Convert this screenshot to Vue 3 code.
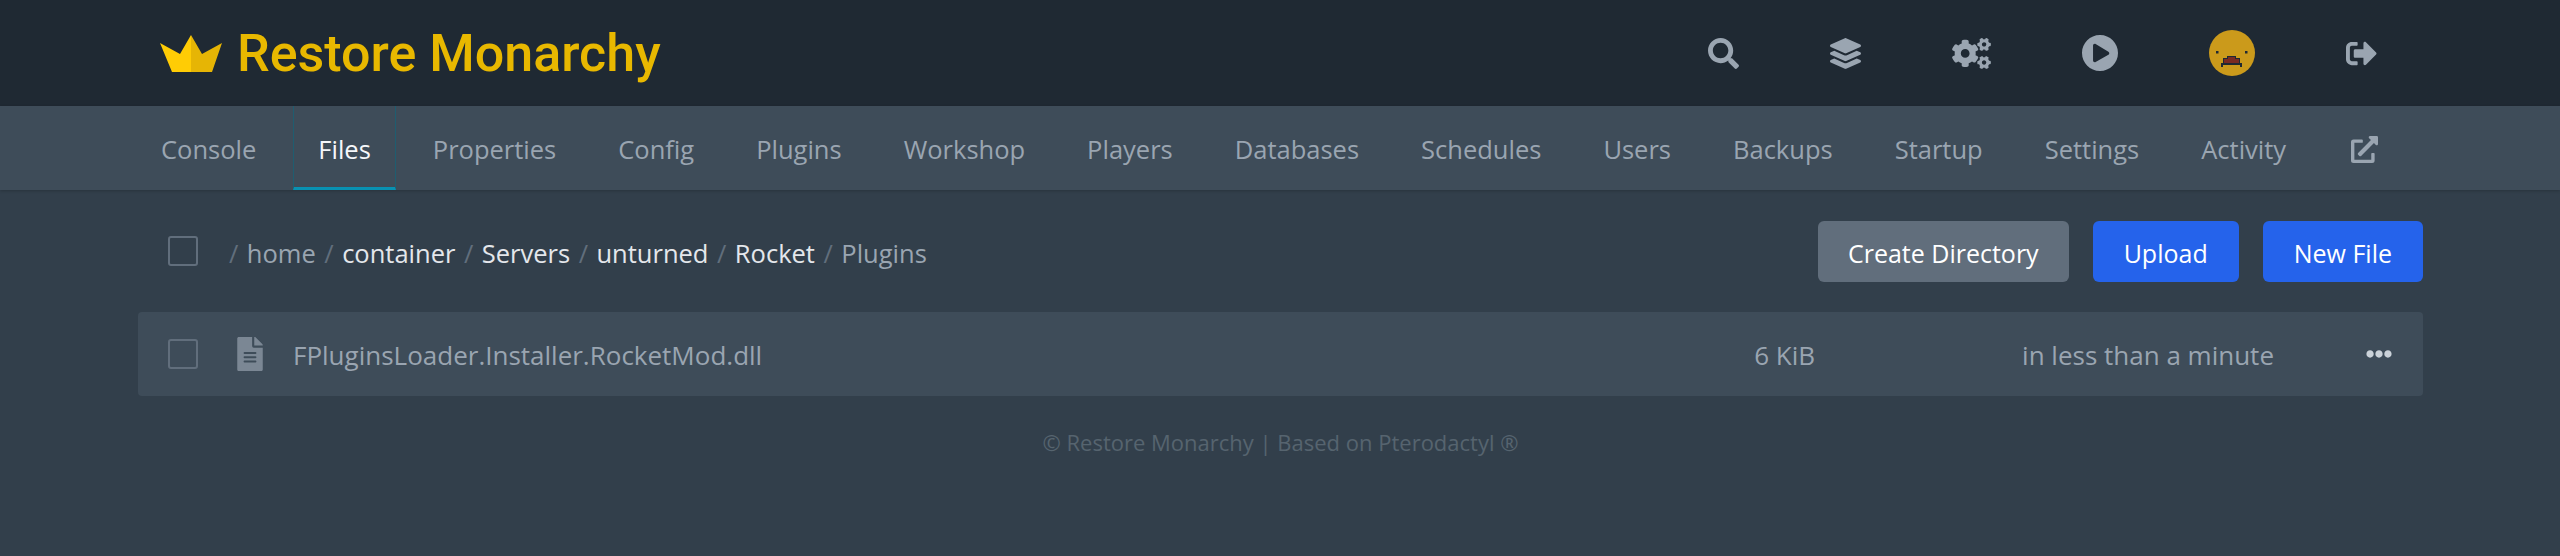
<template>
  <div class="page">
    <header class="topbar">
      <div class="topbar-inner">
        <a class="brand">
          <svg class="crown" viewBox="0 0 62 37">
            <path d="M31 0 L42 19 L62 8 L52 37 L31 37 Z" fill="#e6b505" />
            <path d="M31 0 L20 19 L0 8 L12 37 L31 37 Z" fill="#ffcc05" />
          </svg>
          <span class="brand-name">Restore Monarchy</span>
        </a>
        <div class="top-icons">
          <span v-for="icon in topIcons" :key="icon.name" class="top-icon" :class="icon.name">
            <svg :viewBox="icon.box"><path :d="icon.d" /></svg>
          </span>
          <span class="top-icon avatar-wrap">
            <svg class="avatar" viewBox="0 0 46 46">
              <circle cx="23" cy="23" r="23" fill="#cb9a1b" />
              <rect x="7" y="21" width="2.5" height="2.5" fill="#1f2933" />
              <rect x="36" y="21" width="2.5" height="2.5" fill="#1f2933" />
              <rect x="18" y="26" width="9" height="2" fill="#1f2933" />
              <rect x="14" y="28" width="17" height="6" fill="#1f2933" />
              <rect x="19" y="27" width="7" height="2" fill="#7a2a22" />
              <rect x="15" y="29" width="15" height="4" fill="#7a2a22" />
              <rect x="12" y="33" width="21" height="2" fill="#1f2933" />
              <rect x="12" y="35" width="2" height="2" fill="#1f2933" />
              <rect x="31" y="35" width="2" height="2" fill="#1f2933" />
            </svg>
          </span>
          <span class="top-icon logout">
            <svg viewBox="0 0 512 512"><path :d="icons.logout" /></svg>
          </span>
        </div>
      </div>
    </header>

    <nav class="subnav">
      <div class="subnav-inner">
        <a v-for="tab in tabs" :key="tab" class="tab" :class="{ active: tab === 'Files' }">{{ tab }}</a>
        <a class="tab tab-ext">
          <svg viewBox="0 0 512 512"><path :d="icons.external" /></svg>
        </a>
      </div>
    </nav>

    <main class="content">
      <div class="toolbar">
        <div class="crumbs-wrap">
          <span class="checkbox"></span>
          <div class="crumbs">
            <span class="sep">/</span>
            <span class="crumb muted">home</span>
            <span class="sep">/</span>
            <template v-for="part in path" :key="part">
              <span class="crumb">{{ part }}</span>
              <span class="sep">/</span>
            </template>
            <span class="crumb muted">Plugins</span>
          </div>
        </div>
        <div class="actions">
          <button class="btn btn-grey">Create Directory</button>
          <button class="btn btn-blue">Upload</button>
          <button class="btn btn-blue">New File</button>
        </div>
      </div>

      <div class="file-row">
        <span class="checkbox"></span>
        <svg class="file-icon" viewBox="0 0 384 512"><path :d="icons.file" /></svg>
        <span class="file-name">FPluginsLoader.Installer.RocketMod.dll</span>
        <span class="file-size">6 KiB</span>
        <span class="file-date">in less than a minute</span>
        <svg class="file-menu" viewBox="0 0 512 512"><path :d="icons.dots" /></svg>
      </div>

      <p class="footer">© Restore Monarchy | Based on Pterodactyl ®</p>
    </main>
  </div>
</template>

<script setup>
const icons = {
  external: 'M432,320H400a16,16,0,0,0-16,16V448H64V128H208a16,16,0,0,0,16-16V80a16,16,0,0,0-16-16H48A48,48,0,0,0,0,112V464a48,48,0,0,0,48,48H400a48,48,0,0,0,48-48V336A16,16,0,0,0,432,320ZM488,0h-128c-21.37,0-32.05,25.91-17,41l35.73,35.73L135,320.37a24,24,0,0,0,0,34L157.67,377a24,24,0,0,0,34,0L435.28,133.32,471,169c15,15,41,4.5,41-17V24A24,24,0,0,0,488,0Z',
  file: 'M224 136V0H24C10.7 0 0 10.7 0 24v464c0 13.3 10.7 24 24 24h336c13.3 0 24-10.7 24-24V160H248c-13.2 0-24-10.8-24-24zm64 236c0 6.6-5.4 12-12 12H108c-6.6 0-12-5.4-12-12v-8c0-6.6 5.4-12 12-12h168c6.6 0 12 5.4 12 12v8zm0-64c0 6.6-5.4 12-12 12H108c-6.6 0-12-5.4-12-12v-8c0-6.6 5.4-12 12-12h168c6.6 0 12 5.4 12 12v8zm0-72v8c0 6.6-5.4 12-12 12H108c-6.6 0-12-5.4-12-12v-8c0-6.6 5.4-12 12-12h168c6.6 0 12 5.4 12 12zm96-114.1v6.1H256V0h6.1c6.4 0 12.5 2.5 17 7l97.9 98c4.5 4.5 7 10.6 7 16.9z',
  dots: 'M328 256c0 39.8-32.2 72-72 72s-72-32.2-72-72 32.2-72 72-72 72 32.2 72 72zm104-72c-39.8 0-72 32.2-72 72s32.2 72 72 72 72-32.2 72-72-32.2-72-72-72zm-352 0c-39.8 0-72 32.2-72 72s32.2 72 72 72 72-32.2 72-72-32.2-72-72-72z',
  logout: 'M497 273L329 441c-15 15-41 4.5-41-17v-96H152c-13.3 0-24-10.7-24-24v-96c0-13.3 10.7-24 24-24h136V88c0-21.4 25.9-32 41-17l168 168c9.3 9.4 9.3 24.6 0 34zM192 436v-40c0-6.6-5.4-12-12-12H96c-17.7 0-32-14.3-32-32V160c0-17.7 14.3-32 32-32h84c6.6 0 12-5.4 12-12V76c0-6.6-5.4-12-12-12H96c-53 0-96 43-96 96v192c0 53 43 96 96 96h84c6.6 0 12-5.4 12-12z',
}

const topIcons = [
  { name: 'search', box: '0 0 512 512', d: 'M505 442.7L405.3 343c-4.5-4.5-10.6-7-17-7H372c27.6-35.3 44-79.7 44-128C416 93.1 322.9 0 208 0S0 93.1 0 208s93.1 208 208 208c48.3 0 92.7-16.4 128-44v16.3c0 6.4 2.5 12.5 7 17l99.7 99.7c9.4 9.4 24.6 9.4 33.9 0l28.3-28.3c9.4-9.4 9.4-24.6.1-34zM208 336c-70.7 0-128-57.2-128-128 0-70.7 57.2-128 128-128 70.7 0 128 57.2 128 128 0 70.7-57.2 128-128 128z' },
  { name: 'layers', box: '0 0 512 512', d: 'M12.41 148.02l232.94 105.67c6.8 3.09 14.49 3.09 21.29 0l232.94-105.67c16.55-7.51 16.55-32.52 0-40.03L266.65 2.31a25.607 25.607 0 0 0-21.29 0L12.41 107.98c-16.55 7.51-16.55 32.53 0 40.04zm487.18 88.28l-58.09-26.33-161.64 73.27c-7.56 3.43-15.59 5.17-23.86 5.17s-16.29-1.74-23.86-5.17L70.51 209.97l-58.1 26.33c-16.55 7.5-16.55 32.5 0 40l232.94 105.59c6.8 3.08 14.49 3.08 21.29 0L499.59 276.3c16.55-7.5 16.55-32.5 0-40zm0 127.8l-57.87-26.23-161.86 73.37c-7.56 3.43-15.59 5.17-23.86 5.17s-16.29-1.74-23.86-5.17L70.29 337.87 12.41 364.1c-16.55 7.5-16.55 32.5 0 40l232.94 105.59c6.8 3.08 14.49 3.08 21.29 0L499.59 404.1c16.55-7.5 16.55-32.5 0-40z' },
  { name: 'cogs', box: '0 0 640 512', d: 'M512.1 191l-8.2 14.3c-3 5.3-9.4 7.5-15.1 5.4-11.8-4.4-22.6-10.7-32.1-18.6-4.6-3.8-5.8-10.5-2.8-15.7l8.2-14.3c-6.9-8-12.3-17.3-15.9-27.4h-16.5c-6 0-11.2-4.3-12.2-10.3-2-12-2.1-24.6 0-37.1 1-6 6.2-10.4 12.2-10.4h16.5c3.6-10.1 9-19.4 15.9-27.4l-8.2-14.3c-3-5.2-1.9-11.9 2.8-15.7 9.5-7.9 20.4-14.2 32.1-18.6 5.7-2.1 12.1.1 15.1 5.4l8.2 14.3c10.5-1.9 21.2-1.9 31.7 0L552 6.3c3-5.3 9.4-7.5 15.1-5.4 11.8 4.4 22.6 10.7 32.1 18.6 4.6 3.8 5.8 10.5 2.8 15.7l-8.2 14.3c6.9 8 12.3 17.3 15.9 27.4h16.5c6 0 11.2 4.3 12.2 10.3 2 12 2.1 24.6 0 37.1-1 6-6.2 10.4-12.2 10.4h-16.5c-3.6 10.1-9 19.4-15.9 27.4l8.2 14.3c3 5.2 1.9 11.9-2.8 15.7-9.5 7.9-20.4 14.2-32.1 18.6-5.7 2.1-12.1-.1-15.1-5.4l-8.2-14.3c-10.4 1.9-21.2 1.9-31.7 0zm-10.5-58.8c38.5 29.6 82.4-14.3 52.8-52.8-38.5-29.7-82.4 14.3-52.8 52.8zM386.3 286.1l33.7 16.8c10.1 5.8 14.5 18.1 10.5 29.1-8.9 24.2-26.4 46.4-42.6 65.8-7.4 8.9-20.2 11.1-30.3 5.3l-29.1-16.8c-16 13.7-34.6 24.6-54.9 31.7v33.6c0 11.6-8.3 21.6-19.7 23.6-24.6 4.2-50.4 4.4-75.9 0-11.5-2-20-11.9-20-23.6V418c-20.3-7.2-38.9-18-54.9-31.7L74 403c-10 5.8-22.9 3.6-30.3-5.3-16.2-19.4-33.3-41.6-42.2-65.7-4-10.9.4-23.2 10.5-29.1l33.3-16.8c-3.9-20.9-3.9-42.4 0-63.4L12 205.8c-10.1-5.8-14.6-18.1-10.5-29 8.9-24.2 26-46.4 42.2-65.8 7.4-8.9 20.2-11.1 30.3-5.3l29.1 16.8c16-13.7 34.6-24.6 54.9-31.7V57.1c0-11.5 8.2-21.5 19.6-23.5 24.6-4.2 50.5-4.4 76-.1 11.5 2 20 11.9 20 23.6v33.6c20.3 7.2 38.9 18 54.9 31.7l29.1-16.8c10-5.8 22.9-3.6 30.3 5.3 16.2 19.4 33.2 41.6 42.1 65.8 4 10.9.1 23.2-10 29.1l-33.7 16.8c3.9 21 3.9 42.5 0 63.5zm-117.6 21.1c59.2-77-28.7-164.9-105.7-105.7-59.2 77 28.7 164.9 105.7 105.7zm243.4 182.7l-8.2 14.3c-3 5.3-9.4 7.5-15.1 5.4-11.8-4.4-22.6-10.7-32.1-18.6-4.6-3.8-5.8-10.5-2.8-15.7l8.2-14.3c-6.9-8-12.3-17.3-15.9-27.4h-16.5c-6 0-11.2-4.3-12.2-10.3-2-12-2.1-24.6 0-37.1 1-6 6.2-10.4 12.2-10.4h16.5c3.6-10.1 9-19.4 15.9-27.4l-8.2-14.3c-3-5.2-1.9-11.9 2.8-15.7 9.5-7.9 20.4-14.2 32.1-18.6 5.7-2.1 12.1.1 15.1 5.4l8.2 14.3c10.5-1.9 21.2-1.9 31.7 0l8.2-14.3c3-5.3 9.4-7.5 15.1-5.4 11.8 4.4 22.6 10.7 32.1 18.6 4.6 3.8 5.8 10.5 2.8 15.7l-8.2 14.3c6.9 8 12.3 17.3 15.9 27.4h16.5c6 0 11.2 4.3 12.2 10.3 2 12 2.1 24.6 0 37.1-1 6-6.2 10.4-12.2 10.4h-16.5c-3.6 10.1-9 19.4-15.9 27.4l8.2 14.3c3 5.2 1.9 11.9-2.8 15.7-9.5 7.9-20.4 14.2-32.1 18.6-5.7 2.1-12.1-.1-15.1-5.4l-8.2-14.3c-10.4 1.9-21.2 1.9-31.7 0zM501.6 431c38.5 29.6 82.4-14.3 52.8-52.8-38.5-29.6-82.4 14.3-52.8 52.8z' },
  { name: 'play', box: '8 8 496 496', d: 'M256 8C119 8 8 119 8 256s111 248 248 248 248-111 248-248S393 8 256 8zm115.7 272l-176 101c-15.8 8.8-35.7-2.5-35.7-21V152c0-18.4 19.8-29.8 35.7-21l176 107c16.4 9.2 16.4 32.9 0 42z' },
]

const tabs = ['Console', 'Files', 'Properties', 'Config', 'Plugins', 'Workshop', 'Players', 'Databases', 'Schedules', 'Users', 'Backups', 'Startup', 'Settings', 'Activity']
const path = ['container', 'Servers', 'unturned', 'Rocket']
</script>

<style>
body {
  background: #323f4b;
}
</style>

<style scoped>
.page {
  min-height: 556px;
  background: #323f4b;
  font-family: "Open Sans", "Noto Sans", sans-serif;
  color: #cbd2d9;
}

.topbar {
  height: 106px;
  background: #1f2933;
}

.topbar-inner {
  height: 100%;
  padding: 0 183px 0 160px;
  display: flex;
  align-items: center;
  justify-content: space-between;
}

.brand {
  display: flex;
  align-items: center;
  gap: 15px;
}

.crown {
  width: 62px;
  height: 37px;
  margin-top: 1px;
}

.brand-name {
  font-family: Roboto, sans-serif;
  font-weight: 500;
  font-size: 52px;
  line-height: 60px;
  margin-top: 1px;
  color: #e8b800;
}

.top-icons {
  display: flex;
  align-items: center;
  gap: 91px;
  height: 100%;
}

.top-icon {
  display: flex;
  align-items: center;
  justify-content: center;
  fill: #9aa5b1;
}

.search svg { width: 31px; height: 31px; }
.layers svg { width: 31px; height: 31px; }
.cogs svg { width: 39px; height: 31px; }
.play svg { width: 36px; height: 36px; }
.logout svg { width: 31px; height: 31px; }
.avatar { width: 46px; height: 46px; display: block; }

.subnav {
  height: 84px;
  background: #3e4c59;
  box-shadow: 0 1px 3px rgba(0, 0, 0, 0.2);
}

.subnav-inner {
  height: 100%;
  padding-left: 136px;
  display: flex;
  gap: 12px;
}

.tab {
  display: flex;
  align-items: center;
  padding: 5px 24px 0;
  font-size: 25.5px;
  color: #9aa5b1;
  border: 1px solid transparent;
  border-width: 0 1px 3px;
}

.tab.active {
  color: #f5f7fa;
  border-color: #1f5d70;
  border-bottom-color: #0891b2;
}

.tab-ext {
  margin-left: 3px;
}

.tab-ext svg {
  width: 27px;
  height: 27px;
  fill: #9aa5b1;
}

.content {
  padding: 0 137px 0 138px;
}

.toolbar {
  height: 122px;
  display: flex;
  align-items: center;
  justify-content: space-between;
}

.crumbs-wrap {
  display: flex;
  align-items: center;
  padding-left: 30px;
}

.checkbox {
  width: 30px;
  height: 30px;
  flex: none;
  box-sizing: border-box;
  border: 2px solid #616e7c;
  border-radius: 3px;
}

.crumbs {
  margin-left: 31px;
  padding-top: 3px;
  display: flex;
  gap: 8.5px;
  font-size: 25.5px;
  color: #e4e7eb;
}

.sep {
  color: #616e7c;
}

.muted {
  color: #9aa5b1;
}

.actions {
  display: flex;
  gap: 24px;
}

.btn {
  height: 61px;
  padding: 3px 31px 0;
  border: 0;
  border-radius: 6px;
  font-family: inherit;
  font-size: 25px;
  color: #fff;
}

.btn-grey {
  padding: 3px 30px 0;
  background: #616e7c;
}

.btn-blue {
  background: #2563eb;
}

.file-row {
  height: 84px;
  padding-left: 30px;
  display: flex;
  align-items: center;
  background: #3e4c59;
  border-radius: 4px;
  font-size: 26px;
  color: #9aa5b1;
}

.file-icon {
  width: 26px;
  height: 34px;
  margin-left: 39px;
  fill: #7b8794;
}

.file-name {
  margin-left: 30px;
  padding-top: 2px;
  flex: 1;
}

.file-size {
  padding-top: 2px;
  margin-right: 207px;
}

.file-date {
  padding-top: 2px;
  margin-right: 92px;
}

.file-menu {
  width: 26px;
  height: 26px;
  margin-right: 31px;
  fill: #cbd2d9;
}

.footer {
  margin: 31px 0 0;
  text-align: center;
  font-size: 22px;
  color: #56646f;
}
</style>
